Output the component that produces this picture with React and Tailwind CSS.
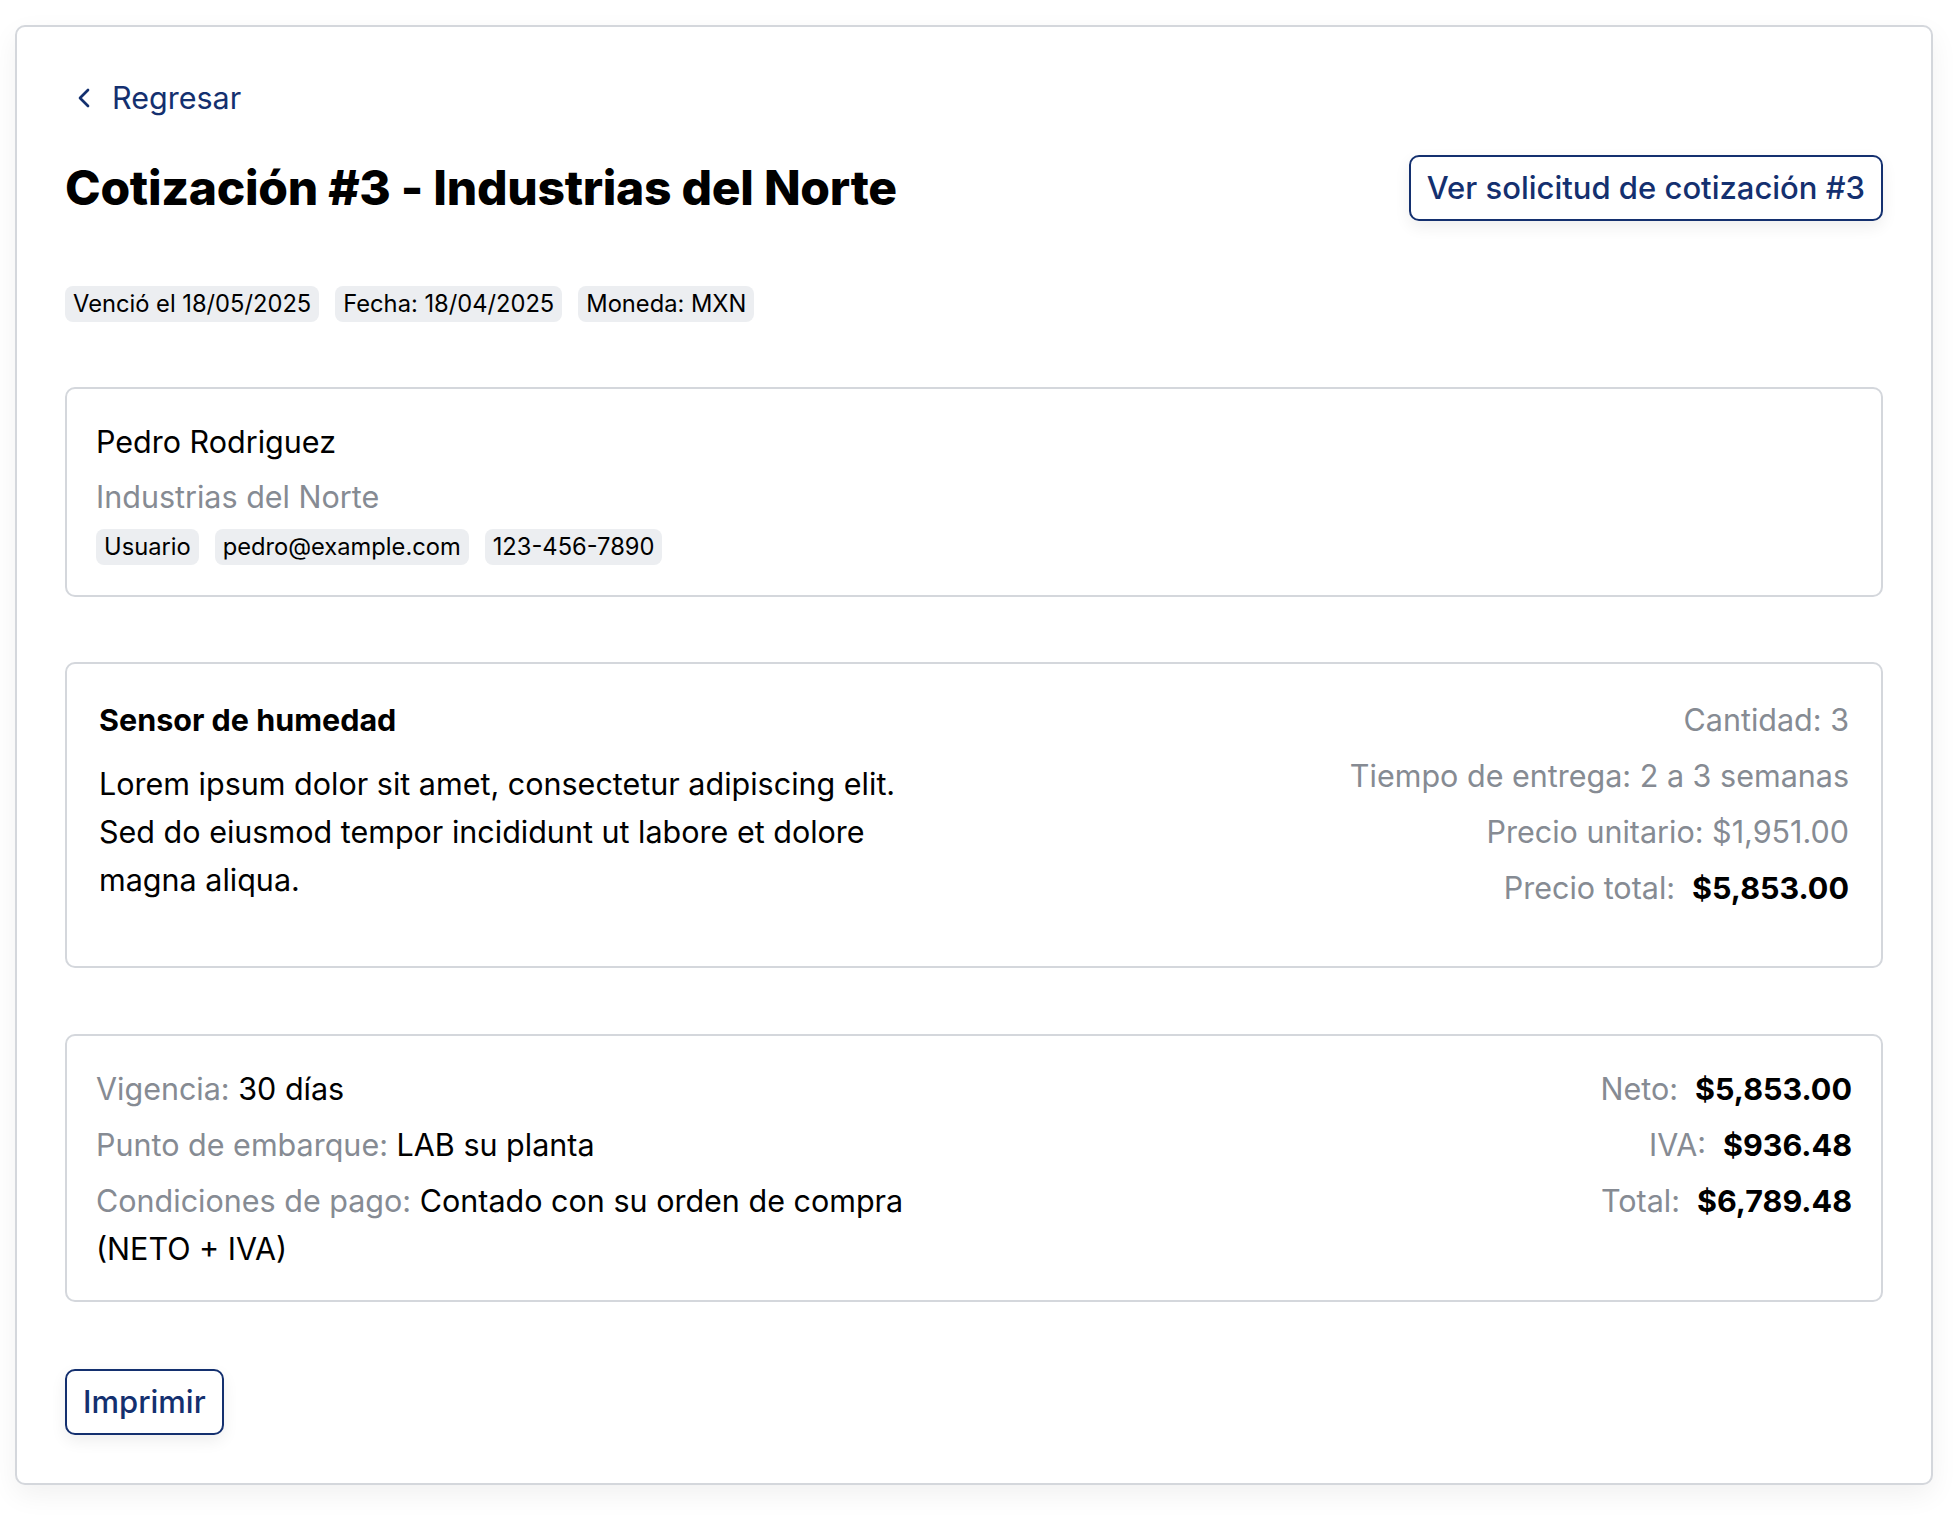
import { ChevronLeft } from 'lucide-react';

const badges = ['Venció el 18/05/2025', 'Fecha: 18/04/2025', 'Moneda: MXN'];
const contact = ['Usuario', 'pedro@example.com', '123-456-7890'];

function Badge({ children }) {
  return (
    <span className="inline-block rounded-[8px] bg-[#eceef1] px-[8px] text-[23.7px] leading-[36px] text-black">
      {children}
    </span>
  );
}

function OutlineButton({ children }) {
  return (
    <button className="h-[66px] rounded-[10px] border-2 border-[#14306f] bg-white px-[16px] text-[31px] font-medium text-[#14306f] shadow-[0_6px_16px_rgba(0,0,0,0.07)]">
      {children}
    </button>
  );
}

export default function App() {
  return (
    <div className="min-h-screen bg-white pt-[25px] pl-[15px] pr-[25px] pb-[30px] font-['Inter',sans-serif] text-black">
      <div className="rounded-[10px] border-2 border-[#d4d7dc] bg-white px-[48px] pt-[48px] pb-[48px] shadow-[0_10px_28px_rgba(0,0,0,0.06)]">
        {/* Back link */}
        <a className="flex items-center text-[30.5px] leading-[46px] text-[#14306f]">
          <ChevronLeft className="ml-[3px] h-[32px] w-[32px]" strokeWidth={2} />
          <span className="ml-[12px]">Regresar</span>
        </a>

        {/* Header */}
        <div className="mt-[34px] flex items-center justify-between">
          <h1 className="text-[48px] font-extrabold leading-[58px] tracking-[-0.006em]">
            Cotización #3 - Industrias del Norte
          </h1>
          <OutlineButton>Ver solicitud de cotización #3</OutlineButton>
        </div>

        <div className="mt-[65px] flex gap-[16px]">
          {badges.map(b => <Badge key={b}>{b}</Badge>)}
        </div>

        {/* Customer */}
        <div className="mt-[65px] rounded-[10px] border-2 border-[#d4d7dc] px-[29px] py-[30px]">
          <p className="text-[30.5px] leading-[46px]">Pedro Rodriguez</p>
          <p className="mt-[9px] text-[30.5px] leading-[46px] text-[#868b93]">Industrias del Norte</p>
          <div className="mt-[9px] flex gap-[16px]">
            {contact.map(c => <Badge key={c}>{c}</Badge>)}
          </div>
        </div>

        {/* Item */}
        <div className="mt-[65px] flex justify-between rounded-[10px] border-2 border-[#d4d7dc] px-[32px] pt-[32px] pb-[54px] text-[30.5px] leading-[48px]">
          <div className="w-[835px]">
            <p className="font-bold">Sensor de humedad</p>
            <p className="mt-[16px]">
              Lorem ipsum dolor sit amet, consectetur adipiscing elit. Sed do eiusmod tempor incididunt ut labore et dolore magna aliqua.
            </p>
          </div>
          <div className="flex flex-col gap-[8px] text-right text-[#868b93]">
            <p>Cantidad: 3</p>
            <p>Tiempo de entrega: 2 a 3 semanas</p>
            <p>Precio unitario: $1,951.00</p>
            <p>
              Precio total:<span className="ml-[17px] font-bold text-black">$5,853.00</span>
            </p>
          </div>
        </div>

        {/* Terms & totals */}
        <div className="mt-[66px] flex justify-between rounded-[10px] border-2 border-[#d4d7dc] px-[29px] pt-[29px] pb-[27px] text-[30.5px] leading-[48px]">
          <div className="flex w-[835px] flex-col gap-[8px]">
            <p><span className="text-[#868b93]">Vigencia:</span> 30 días</p>
            <p><span className="text-[#868b93]">Punto de embarque:</span> LAB su planta</p>
            <p>
              <span className="text-[#868b93]">Condiciones de pago:</span> Contado con su orden de compra (NETO + IVA)
            </p>
          </div>
          <div className="flex flex-col gap-[8px] text-right text-[#868b93]">
            <p>Neto:<span className="ml-[17px] font-bold text-black">$5,853.00</span></p>
            <p>IVA:<span className="ml-[17px] font-bold text-black">$936.48</span></p>
            <p>Total:<span className="ml-[17px] font-bold text-black">$6,789.48</span></p>
          </div>
        </div>

        <div className="mt-[67px]">
          <OutlineButton>Imprimir</OutlineButton>
        </div>
      </div>
    </div>
  );
}
